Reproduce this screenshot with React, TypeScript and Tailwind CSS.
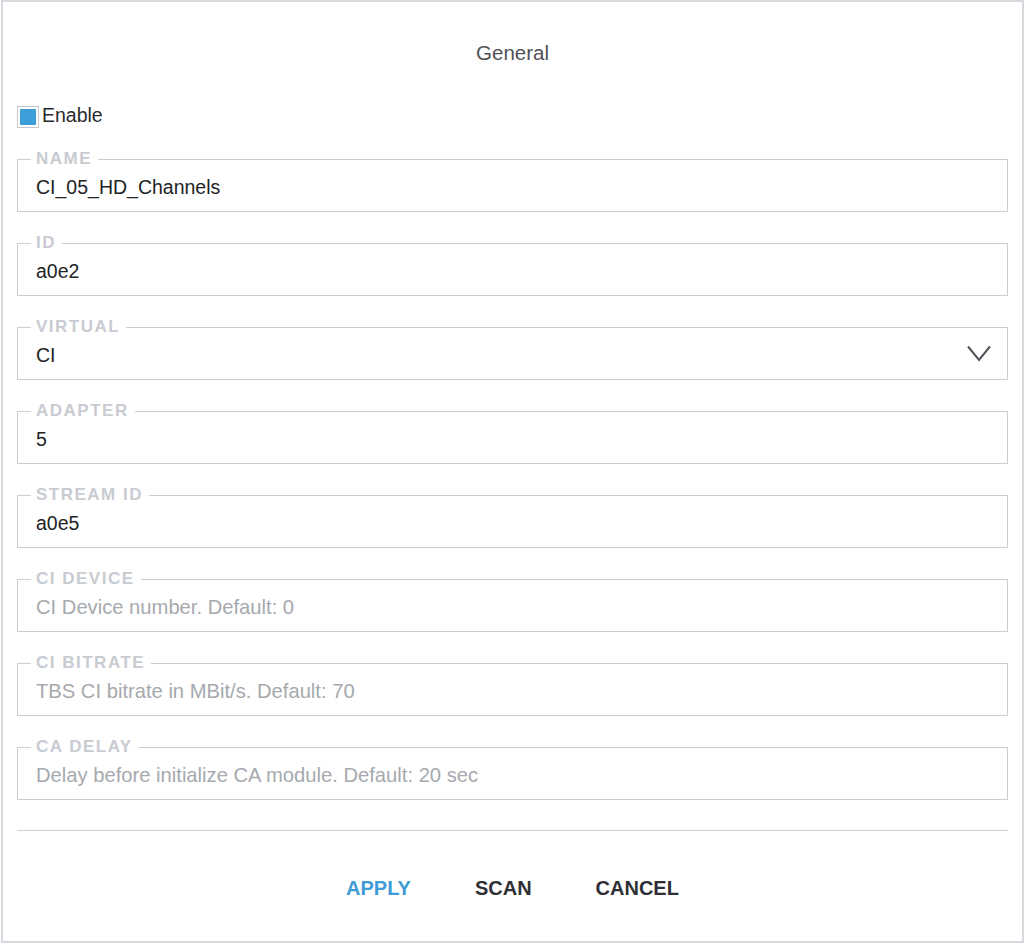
import { useState } from 'react';

type Field = {
  label: string;
  value?: string;
  placeholder?: string;
  select?: boolean;
};

const fields: Field[] = [
  { label: 'Name', value: 'CI_05_HD_Channels' },
  { label: 'ID', value: 'a0e2' },
  { label: 'Virtual', value: 'CI', select: true },
  { label: 'Adapter', value: '5' },
  { label: 'Stream ID', value: 'a0e5' },
  { label: 'CI Device', placeholder: 'CI Device number. Default: 0' },
  { label: 'CI Bitrate', placeholder: 'TBS CI bitrate in MBit/s. Default: 70' },
  { label: 'CA Delay', placeholder: 'Delay before initialize CA module. Default: 20 sec' },
];

function Chevron() {
  return (
    <svg width="24" height="17" viewBox="0 0 24 17" fill="none" className="self-start mt-[2px] shrink-0">
      <polyline points="1,1.5 12,15 23,1.5" stroke="#505258" strokeWidth="2" strokeLinejoin="miter" />
    </svg>
  );
}

function FormField({ field }: { field: Field }) {
  return (
    <fieldset className="border border-[#cbcdd2] pl-[18px] pr-[16px] pt-[7px] pb-[12px] m-0 min-w-0">
      <legend className="-ml-[5px] pl-[5px] pr-[6px] text-[17px] leading-[18px] font-bold uppercase tracking-[1.5px] text-[#c8cbd1]">
        {field.label}
      </legend>
      <div className="flex items-center justify-between h-[24px]">
        {field.select ? (
          <span className="text-[19.5px] leading-[24px] text-[#222325]">{field.value}</span>
        ) : (
          <input
            className="w-full h-[24px] bg-transparent outline-none border-0 p-0 text-[19.5px] leading-[24px] text-[#222325] placeholder:text-[#a6a9ae] placeholder:text-[20.2px]"
            defaultValue={field.value}
            placeholder={field.placeholder}
          />
        )}
        {field.select && <Chevron />}
      </div>
    </fieldset>
  );
}

export default function App() {
  const [enabled, setEnabled] = useState(true);

  return (
    <div
      className="ml-px w-[1023px] h-[943px] border-2 border-[#d8d9de] bg-white px-[14px] flex flex-col"
      style={{ fontFamily: '"Liberation Sans", Arial, Helvetica, sans-serif' }}
    >
      <h2 className="mt-[39px] text-center text-[20.5px] leading-[24px] font-normal text-[#4f5156]">General</h2>

      <label className="mt-[41px] flex items-start gap-[3px] cursor-pointer select-none">
        <span
          onClick={() => setEnabled(!enabled)}
          className="w-[22px] h-[22px] border border-[#c3c6cc] p-[2px] bg-white shrink-0"
        >
          {enabled && <span className="block w-full h-full bg-[#3d9dd8]" />}
        </span>
        <span className="-mt-[2px] text-[19.5px] leading-[22px] text-[#2a2b2e]">Enable</span>
      </label>

      <div className="mt-[22px] flex flex-col gap-[22px]">
        {fields.map((f) => (
          <FormField key={f.label} field={f} />
        ))}
      </div>

      <div className="mt-[30px] h-px bg-[#cfd1d6]" />

      <div className="mt-[45px] flex justify-center">
        <button className="px-[32px] text-[20px] leading-[24px] font-bold text-[#3d9bd6]">APPLY</button>
        <button className="px-[32px] text-[20px] leading-[24px] font-bold text-[#2e3035]">SCAN</button>
        <button className="px-[32px] text-[20px] leading-[24px] font-bold text-[#2e3035]">CANCEL</button>
      </div>
    </div>
  );
}
